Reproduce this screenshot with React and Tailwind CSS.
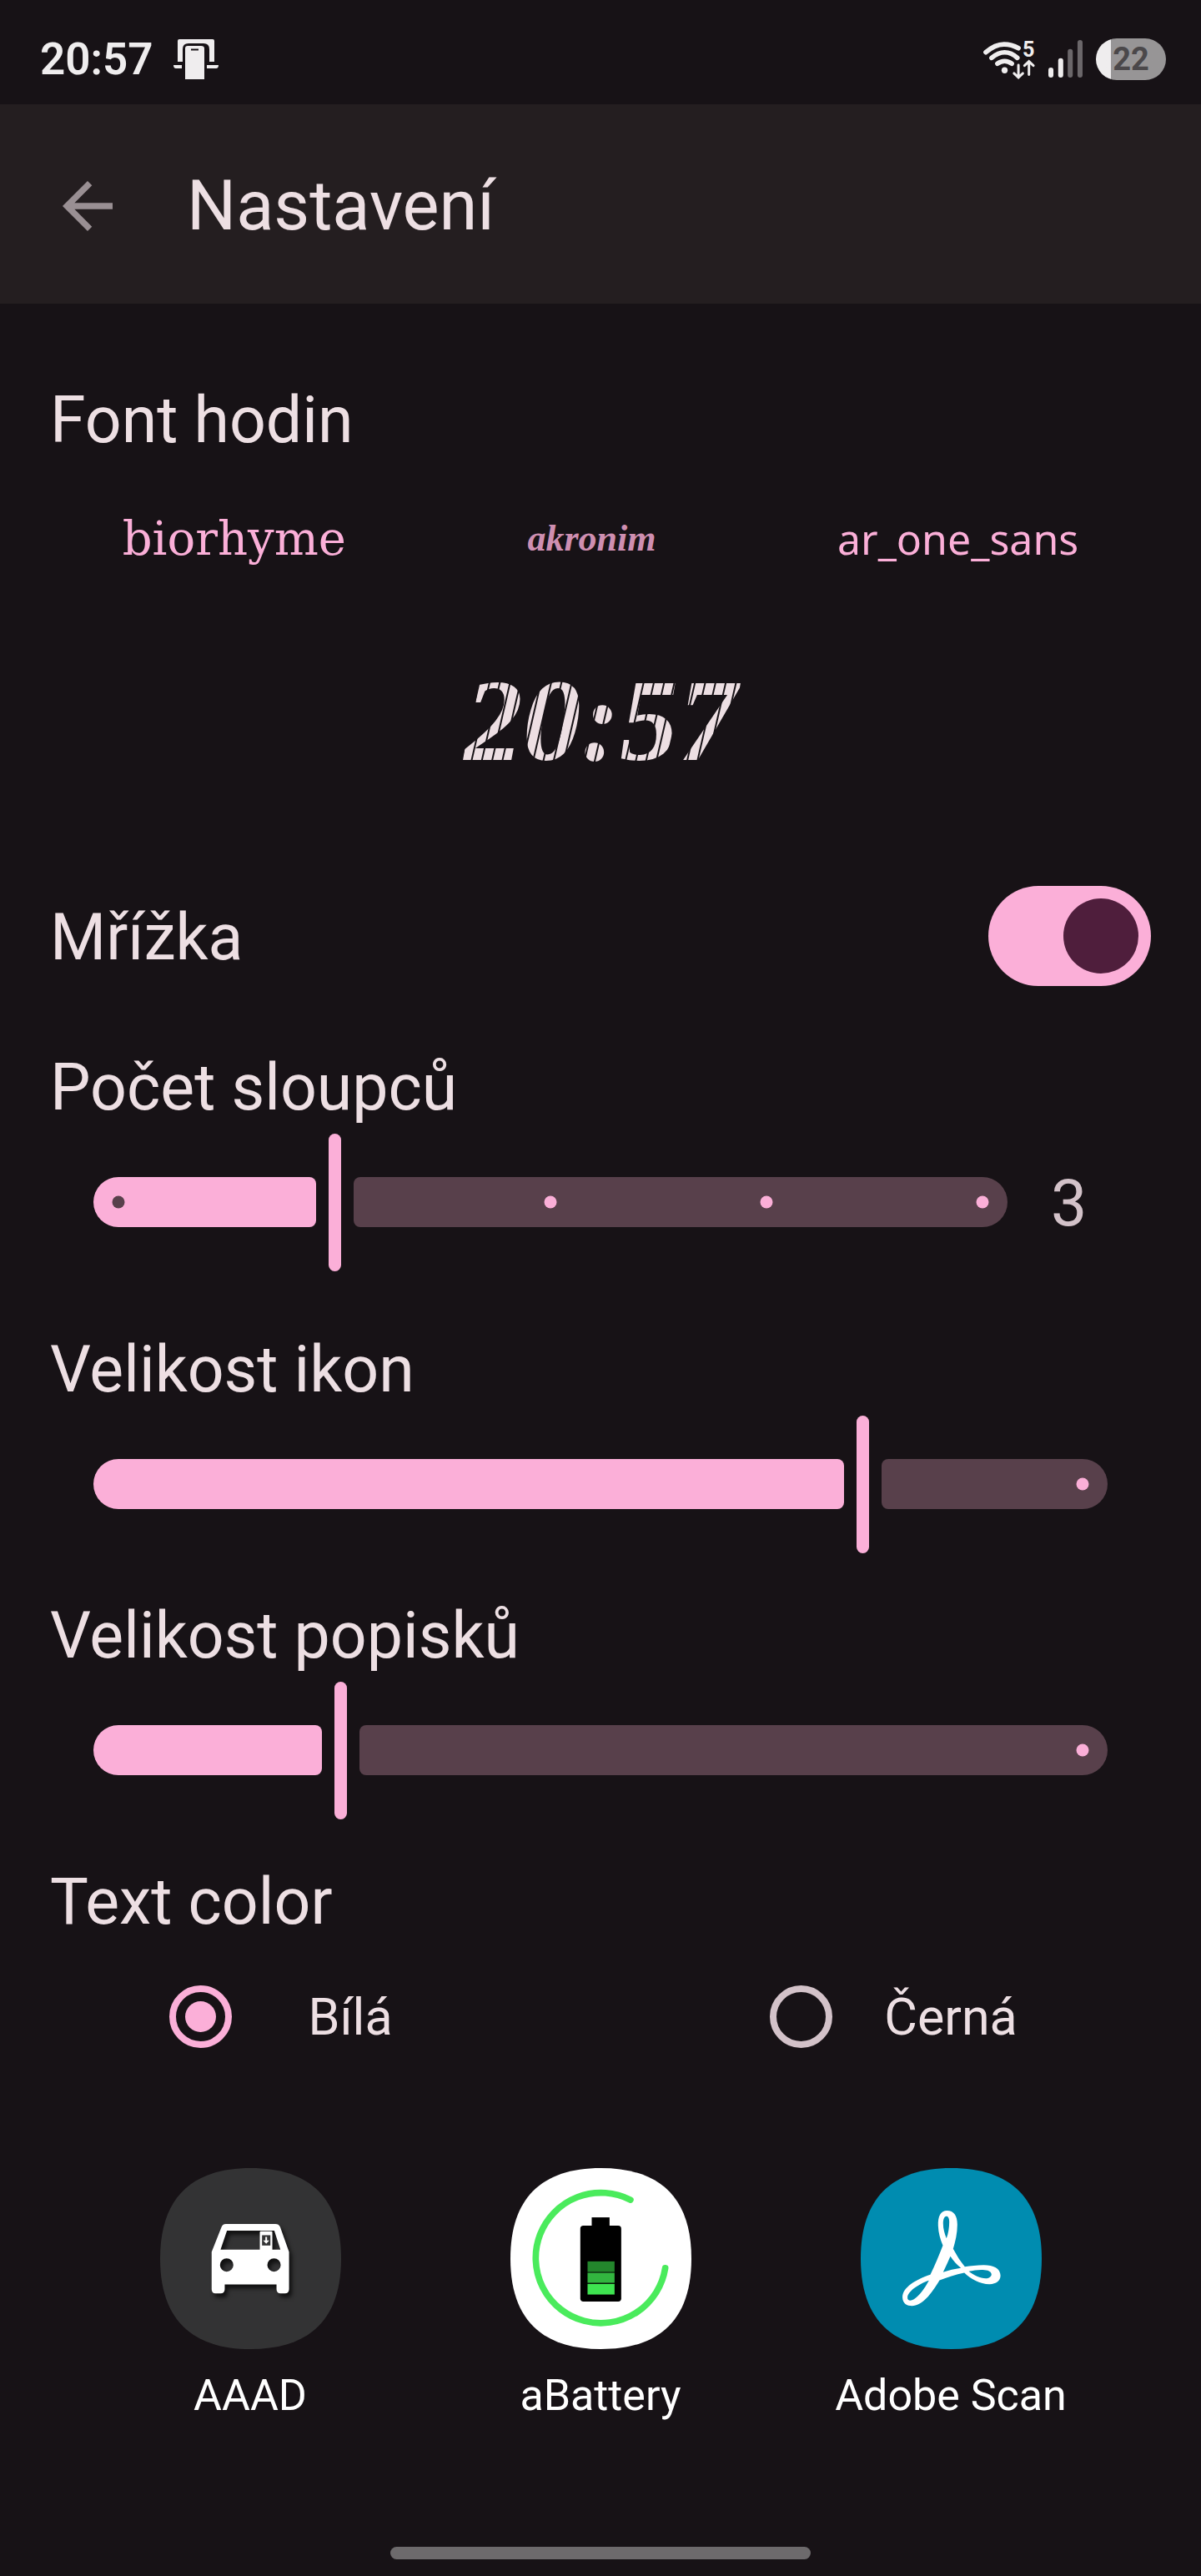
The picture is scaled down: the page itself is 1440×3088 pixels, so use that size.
import React, { useState } from "react";

const SQUIRCLE =
  "M325 0C540 0 650 110 650 325C650 540 540 650 325 650C110 650 0 540 0 325C0 110 110 0 325 0Z";

const fonts = [
  { id: "biorhyme", className: "font-['DejaVu_Serif',serif] text-[56px]" },
  {
    id: "akronim",
    className: "font-['Liberation_Serif',serif] text-[44px] font-bold italic text-[#cf8fb1]",
  },
  { id: "ar_one_sans", className: "font-['Noto_Sans',sans-serif] text-[50px]" },
];

function StatusBar() {
  return (
    <div className="flex h-[125px] items-center justify-between pl-12 pr-[42px] pt-4 text-[#efedee]">
      <div className="flex items-center gap-6">
        <span className="text-[53px] font-semibold leading-[60px]">20:57</span>
        <svg className="h-12 w-[54px]" viewBox="0 0 54 48" fill="currentColor">
          <path d="M5 2Q5 0 7 0H47Q49 0 49 2V27H43V12Q43 5 36 5H18Q11 5 11 12V27H5Z" />
          <path d="M0 31H10V35H3Q0 35 0 31ZM54 31H40V35H51Q54 35 54 31Z" />
          <path
            fillRule="evenodd"
            d="M14 11Q14 8 17 8H33Q37 8 37 11V48H14ZM21 11.500V13.500H30V11.500Z"
          />
        </svg>
      </div>
      <div className="flex items-center gap-4">
        <svg className="h-[52px] w-[63px]" viewBox="110 66 190 156" fill="none" stroke="currentColor" strokeLinecap="round">
          <g strokeWidth="17">
            <path d="M122 119C146 98 166 90 188 90C208 90 224 95 240 104" />
            <path d="M143 139C160 125 174 119 190 119C207 119 221 125 236 139" />
            <path d="M164 160C180 148 200 148 216 160" />
          </g>
          <circle cx="190" cy="184" r="11" fill="currentColor" stroke="none" />
          <g strokeWidth="9">
            <path d="M240 165V208M224 195L240 210L256 195" />
            <path d="M278 200V154M262 167L278 152L294 167" />
          </g>
          <text x="255" y="136" fontSize="76" fontWeight="700" fill="currentColor" stroke="none">
            5
          </text>
        </svg>
        <svg className="h-[45px] w-[41px]" viewBox="344 80 122 134">
          <rect x="344" y="178" width="18" height="36" rx="9" fill="#efedee" />
          <rect x="379" y="145" width="18" height="69" rx="9" fill="#efedee" />
          <rect x="413" y="112" width="18" height="102" rx="9" fill="#6b676a" />
          <rect x="448" y="80" width="18" height="134" rx="9" fill="#6b676a" />
        </svg>
        <div className="flex h-[50px] w-[84px] items-center justify-center rounded-full bg-linear-to-r from-[#efedee] from-[22%] to-[#979596] to-[22%] text-[38px] font-bold leading-none text-[#4b484a]">
          22
        </div>
      </div>
    </div>
  );
}

function Slider({ id, label, min, max, step, value, onChange, ticks, showValue }) {
  const fraction = (value - min) / (max - min);
  // Only the end stop is drawn when the slider has no steps
  const stops = ticks || [1];

  return (
    <section>
      <label htmlFor={id} className="block text-[77px] leading-24">
        {label}
      </label>
      <div className="flex items-center px-[52px]">
        <div className="relative flex h-[178px] flex-1 items-center gap-[15px]">
          <div
            className="h-[60px] rounded-l-[30px] rounded-r-[8px] bg-[#fbafd8]"
            style={{ width: `calc(8px + (100% - 60px) * ${fraction})` }}
          />
          <div className="h-[165px] w-[15px] rounded-full bg-[#fbafd8]" />
          <div className="h-[60px] flex-1 rounded-l-[8px] rounded-r-[30px] bg-[#58404b]" />
          <div className="pointer-events-none absolute inset-x-[30px] top-1/2">
            {stops
              .filter((stop) => stop !== fraction)
              .map((stop) => (
                <span
                  key={stop}
                  className={`absolute size-[15px] -translate-1/2 rounded-full ${
                    stop < fraction ? "bg-[#58404b]" : "bg-[#fbafd8]"
                  }`}
                  style={{ left: `${stop * 100}%` }}
                />
              ))}
          </div>
          <input
            id={id}
            type="range"
            min={min}
            max={max}
            step={step || 1}
            value={value}
            onChange={(e) => onChange(Number(e.target.value))}
            className="absolute inset-0 h-full w-full cursor-pointer opacity-0"
          />
        </div>
        {showValue && (
          <output htmlFor={id} className="w-[120px] pl-[52px] pt-1 text-[77px] leading-24 text-[#d3c2c9]">
            {value}
          </output>
        )}
      </div>
    </section>
  );
}

function ColorOption({ value, label, selected, onSelect }) {
  return (
    <label className="flex cursor-pointer items-center pl-[150px]">
      <span className="flex w-[180px] justify-center">
        <input
          type="radio"
          name="textColor"
          value={value}
          checked={selected}
          onChange={() => onSelect(value)}
          className="flex size-[75px] appearance-none items-center justify-center rounded-full border-8 border-[#d3c2c9] checked:border-[#fbafd8] checked:before:size-[37px] checked:before:rounded-full checked:before:bg-[#fbafd8]"
        />
      </span>
      <span className="w-[180px] text-center text-[61px] leading-[72px]">{label}</span>
    </label>
  );
}

function CarIcon() {
  return (
    <svg className="size-[217px]" viewBox="0 0 650 650">
      <path d={SQUIRCLE} fill="#333334" />
      <g transform="translate(-64 -57)" className="drop-shadow-[10px_14px_8px_rgba(0,0,0,0.7)]">
        <path
          fill="#fff"
          fillRule="evenodd"
          d="M300 258H478Q490 258 495 268L527 358V492Q527 507 512 507H497Q482 507 482 492V475H296V492Q296 507 281 507H263Q249 507 249 492V358L284 270Q288 258 300 258ZM304 282L281 350H496L474 282ZM303 381A24 24 0 1 0 303 429A24 24 0 1 0 303 381ZM473 381A24 24 0 1 0 473 429A24 24 0 1 0 473 381Z"
        />
        <rect x="422" y="284" width="45" height="68" rx="4" fill="#fff" />
        <rect x="430" y="298" width="30" height="37" fill="#333334" />
        <path d="M442 304H448V317H456L445 329L434 317H442Z" fill="#fff" />
      </g>
    </svg>
  );
}

function BatteryIcon() {
  return (
    <svg className="size-[217px]" viewBox="0 0 650 650">
      <path d={SQUIRCLE} fill="#fff" />
      <g transform="translate(-64 -57)">
        <path
          d="M495 171A234 234 0 1 0 620 416"
          fill="none"
          stroke="#4aeb5c"
          strokeWidth="23"
          strokeLinecap="round"
        />
        <rect x="356" y="234" width="64" height="36" />
        <rect x="315" y="264" width="147" height="272" rx="11" />
        <rect x="341" y="392" width="97" height="38" fill="#23862c" />
        <rect x="341" y="433" width="97" height="36" fill="#32b53f" />
        <rect x="341" y="473" width="97" height="38" fill="#3ee350" />
      </g>
    </svg>
  );
}

function ScanIcon() {
  return (
    <svg className="size-[217px]" viewBox="0 0 650 650">
      <path d={SQUIRCLE} fill="#008cb0" />
      <path
        transform="translate(-153 -57)"
        fill="#fff"
        fillRule="evenodd"
        d="M463 210C440 210 430 230 431 264C432 291 439 313 448 335C433 373 420 405 403 440C352 457 302 486 303 522C304 543 319 552 337 552C373 552 405 512 436 460C463 450 494 439 525 433C548 455 580 474 616 474C640 474 655 462 655 443C655 417 629 405 595 405C570 405 548 408 527 411C511 393 498 371 485 347C493 320 500 292 500 260C500 228 487 210 463 210ZM461 230C467 230 471 237 471 250C471 270 468 290 461 309C454 292 449 275 449 256C449 240 454 230 461 230ZM475 374C486 391 499 405 513 416C490 419 469 424 449 431C458 412 467 393 475 374ZM398 461C382 490 366 514 344 528C333 535 320 534 321 521C323 500 360 474 398 461ZM541 428C565 422 592 420 609 425C627 431 628 449 607 453C585 455 561 443 541 428Z"
      />
    </svg>
  );
}

const apps = [
  { name: "AAAD", Icon: CarIcon },
  { name: "aBattery", Icon: BatteryIcon },
  { name: "Adobe Scan", Icon: ScanIcon },
];

function App() {
  const [grid, setGrid] = useState(true);
  const [columns, setColumns] = useState(3);
  const [iconSize, setIconSize] = useState(386);
  const [labelSize, setLabelSize] = useState(115);
  const [textColor, setTextColor] = useState("white");

  return (
    <div className="flex min-h-screen flex-col bg-[#171216] font-[Roboto,sans-serif] text-[#eddfe3]">
      <StatusBar />

      <header className="flex h-[239px] items-center gap-[74px] bg-[#241e20] pl-[60px] pt-1">
        <button type="button" aria-label="Zpět" className="text-[#998f93]">
          <svg className="size-[90px]" viewBox="0 0 24 24" fill="currentColor">
            <path d="M20 11H7.830l5.590-5.590L12 4l-8 8 8 8 1.410-1.410L7.830 13H20v-2z" />
          </svg>
        </button>
        <h1 className="text-[83px] leading-24">Nastavení</h1>
      </header>

      <main className="px-[60px] pt-[92px]">
        <h2 className="text-[77px] leading-24">Font hodin</h2>
        <div className="-mx-[22px] mt-11 flex h-[100px] items-center justify-around text-[#fbafd8]">
          {fonts.map((font) => (
            <button key={font.id} type="button" className={`px-[45px] leading-[72px] ${font.className}`}>
              {font.id}
            </button>
          ))}
        </div>
        <div className="mt-20 flex justify-center">
          <time className="bg-[repeating-linear-gradient(103deg,#eddfe3_0px,#eddfe3_9px,#171216_10px,#171216_11px,#eddfe3_12px)] bg-clip-text px-2 font-['Liberation_Serif',serif] text-[140px] font-bold italic leading-[176px] text-transparent">
            20:57
          </time>
        </div>

        <div className="mt-[110px] flex items-center justify-between">
          <label htmlFor="grid" className="pt-1 text-[77px] leading-24">
            Mřížka
          </label>
          <input
            id="grid"
            type="checkbox"
            role="switch"
            checked={grid}
            onChange={(e) => setGrid(e.target.checked)}
            className="flex h-[120px] w-[195px] cursor-pointer appearance-none items-center rounded-full bg-[#58404b] px-[15px] before:size-[90px] before:rounded-full before:bg-[#4f1e3c] checked:justify-end checked:bg-[#fbafd8]"
          />
        </div>

        <div className="mt-[74px]">
          <Slider
            id="columns"
            label="Počet sloupců"
            min={2}
            max={6}
            value={columns}
            onChange={setColumns}
            ticks={[0, 0.25, 0.5, 0.75, 1]}
            showValue
          />
        </div>
        <div className="mt-16 flex flex-col gap-[45px]">
          <Slider id="iconSize" label="Velikost ikon" min={0} max={500} value={iconSize} onChange={setIconSize} />
          <Slider id="labelSize" label="Velikost popisků" min={0} max={500} value={labelSize} onChange={setLabelSize} />
        </div>

        <fieldset className="mt-[45px]">
          <legend className="text-[77px] leading-24">Text color</legend>
          <div className="-mx-[60px] mt-[52px] grid grid-cols-2">
            <ColorOption value="white" label="Bílá" selected={textColor === "white"} onSelect={setTextColor} />
            <ColorOption value="black" label="Černá" selected={textColor === "black"} onSelect={setTextColor} />
          </div>
        </fieldset>
      </main>

      <ul className={`mt-36 grid grid-cols-3 px-[90px] ${textColor === "white" ? "text-white" : "text-black"}`}>
        {apps.map(({ name, Icon }) => (
          <li key={name} className="flex flex-col items-center gap-6">
            <Icon />
            <span className="text-[52px] leading-16">{name}</span>
          </li>
        ))}
      </ul>

      <div className="mt-auto flex justify-center pb-5">
        <div className="h-[15px] w-[504px] rounded-full bg-[#6d6a6c]" />
      </div>
    </div>
  );
}

export default App;
